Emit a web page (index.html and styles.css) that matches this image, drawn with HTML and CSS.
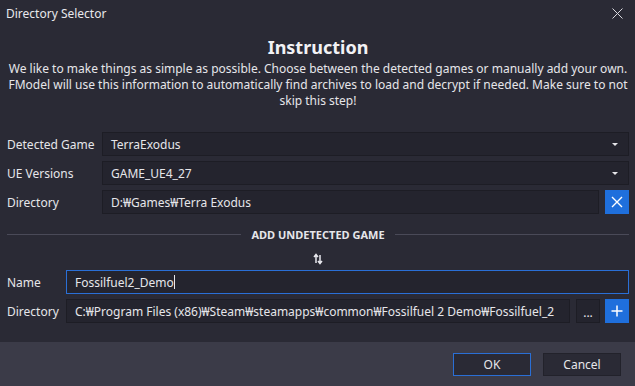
FILE: index.html
```html
<!DOCTYPE html>
<html>

<head>
    <title>Directory Selector</title>
    <meta charset="utf-8">
    <link rel="stylesheet" href="styles.css">
</head>

<body>
    <div class="window">
        <div class="titlebar">
            <span class="title">Directory Selector</span>
            <span class="close">
                <svg width="11" height="11" viewBox="0 0 11 11">
                    <path d="M0.5 0.5 L10.5 10.5 M10.5 0.5 L0.5 10.5" stroke="#d8d8de" stroke-width="1" fill="none" />
                </svg>
            </span>
        </div>

        <div class="content">
            <h1>Instruction</h1>
            <p class="intro">We like to make things as simple as possible. Choose between the detected games or manually add your own.
                FModel will use this information to automatically find archives to load and decrypt if needed. Make sure to not
                skip this step!</p>

            <div class="form detected">
                <div class="row">
                    <label>Detected Game</label>
                    <div class="field select">TerraExodus<span class="caret"></span></div>
                </div>
                <div class="row">
                    <label>UE Versions</label>
                    <div class="field select">GAME_UE4_27<span class="caret"></span></div>
                </div>
                <div class="row">
                    <label>Directory</label>
                    <div class="field">D:₩Games₩Terra Exodus</div>
                    <div class="btn blue">
                        <svg width="12" height="12" viewBox="0 0 12 12">
                            <path d="M1 1 L11 11 M11 1 L1 11" stroke="#fff" stroke-width="1.4" fill="none" />
                        </svg>
                    </div>
                </div>
            </div>

            <div class="separator">
                <span class="line"></span>
                <span class="sep-text">ADD UNDETECTED GAME</span>
                <span class="line"></span>
            </div>

            <div class="swap">
                <svg width="10" height="12" viewBox="0 0 10 12">
                    <path d="M3 10 V2 M1 4 L3 1.5 L5 4" stroke="#e8e8ee" stroke-width="1.5" fill="none" />
                    <path d="M7 2 V10 M5 8 L7 10.5 L9 8" stroke="#e8e8ee" stroke-width="1.5" fill="none" />
                </svg>
            </div>

            <div class="form undetected">
                <div class="row">
                    <label>Name</label>
                    <div class="field focused">Fossilfuel2_Demo<span class="cursor"></span></div>
                </div>
                <div class="row">
                    <label>Directory</label>
                    <div class="field">C:₩Program Files (x86)₩Steam₩steamapps₩common₩Fossilfuel 2 Demo₩Fossilfuel_2</div>
                    <div class="btn dark">...</div>
                    <div class="btn blue">
                        <svg width="12" height="12" viewBox="0 0 12 12">
                            <path d="M6 0.5 V11.5 M0.5 6 H11.5" stroke="#fff" stroke-width="1.5" fill="none" />
                        </svg>
                    </div>
                </div>
            </div>
        </div>

        <div class="footer">
            <div class="action ok">OK</div>
            <div class="action">Cancel</div>
        </div>
    </div>
</body>

</html>
```

FILE: styles.css
```css
body {
    margin: 0;
    background: #2a2a35;
    color: #e6e6ea;
    font-family: 'Noto Sans', 'Noto Sans CJK KR', sans-serif;
    font-size: 12px;
}

.window {
    width: 635px;
    height: 386px;
    display: flex;
    flex-direction: column;
    overflow: hidden;
}

.titlebar {
    height: 26px;
    display: flex;
    align-items: center;
    justify-content: space-between;
    padding: 0 12px 0 6px;
    color: #e8e8ec;
}

.close {
    display: flex;
}

.content {
    flex: 1;
    padding: 0 6px 0 7px;
}

h1 {
    margin: 8px 0 0;
    text-align: center;
    font-size: 18px;
    line-height: 26px;
    font-weight: bold;
    color: #f2f2f5;
}

.intro {
    margin: 1px 0 0;
    text-align: center;
    line-height: 16px;
    color: #e6e6ea;
}

.form {
    display: flex;
    flex-direction: column;
    gap: 5px;
}

.detected {
    margin-top: 23px;
}

.row {
    display: flex;
    align-items: center;
    height: 24px;
    gap: 6px;
}

.row label {
    flex: none;
}

.detected label {
    width: 89px;
}

.undetected label {
    width: 53px;
}

.field {
    flex: 1;
    height: 24px;
    box-sizing: border-box;
    display: flex;
    align-items: center;
    padding: 0 8px;
    background: #24242e;
    border: 1px solid #1d1d25;
    color: #e6e6ea;
    white-space: nowrap;
    overflow: hidden;
    position: relative;
}

.field.focused {
    border-color: #2a6fd6;
}

.caret {
    position: absolute;
    right: 10px;
    top: 10px;
    border-left: 3px solid transparent;
    border-right: 3px solid transparent;
    border-top: 3px solid #e6e6ea;
}

.cursor {
    display: inline-block;
    width: 1px;
    height: 14px;
    background: #e6e6ea;
}

.btn {
    flex: none;
    width: 24px;
    height: 24px;
    box-sizing: border-box;
    display: flex;
    align-items: center;
    justify-content: center;
}

.btn.blue {
    background: #1f6fdc;
}

.btn.dark {
    background: #24242e;
    border: 1px solid #1d1d25;
    margin-right: -1px;
    line-height: 1;
    padding-top: 4px;
}

.separator {
    display: flex;
    align-items: center;
    gap: 10px;
    margin-top: 12px;
    height: 16px;
}

.separator .line {
    flex: 1;
    height: 1px;
    background: #4a4a58;
}

.sep-text {
    font-weight: bold;
    font-size: 11px;
    color: #e6e6ea;
}

.swap {
    display: flex;
    justify-content: center;
    margin-top: 11px;
    height: 12px;
}

.undetected {
    margin-top: 5px;
}

.footer {
    height: 44px;
    background: #3b3b48;
    display: flex;
    justify-content: flex-end;
    align-items: center;
    gap: 12px;
    padding-right: 14px;
}

.action {
    width: 78px;
    height: 23px;
    box-sizing: border-box;
    display: flex;
    align-items: center;
    justify-content: center;
    background: #2a2a35;
    border: 1px solid #22222b;
    color: #e6e6ea;
}

.action.ok {
    border-color: #2a6fd6;
}
```
